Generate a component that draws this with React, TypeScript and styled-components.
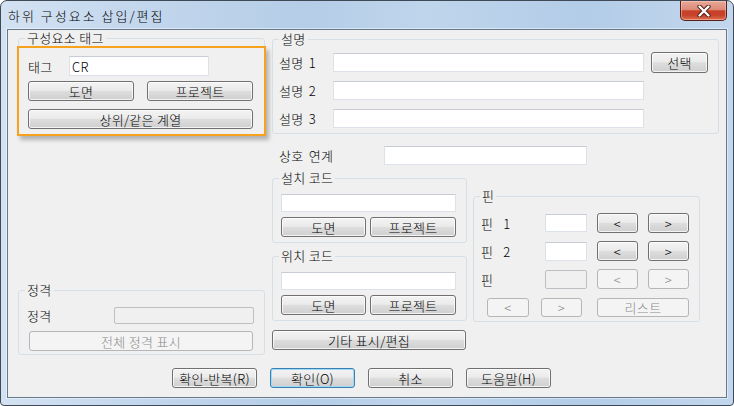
import React from "react";
import styled, { createGlobalStyle, css } from "styled-components";

const GlobalStyle = createGlobalStyle`
  html, body {
    margin: 0;
    padding: 0;
    background: #ffffff;
  }
  body {
    font-family: "Noto Sans CJK KR", "Noto Sans", sans-serif;
    font-size: 13px;
    font-weight: 300;
    letter-spacing: 0.3px;
    color: #000;
  }
  #root {
    width: 734px;
    height: 406px;
  }
`;

// window chrome
const Window = styled.div`
  box-sizing: border-box;
  width: 734px;
  height: 406px;
  display: flex;
  flex-direction: column;
  padding: 0 6px 7px;
  border: 1px solid #3f4a56;
  border-radius: 7px 7px 4px 4px;
  background: linear-gradient(
    90deg,
    #d3e2f2 0%,
    #c3d7ed 18%,
    #b5cde7 42%,
    #bfd5ec 58%,
    #b3cce7 80%,
    #c2d7ed 100%
  );
  overflow: hidden;
`;

const TitleBar = styled.div`
  flex: none;
  height: 28px;
  display: flex;
  justify-content: space-between;
  align-items: flex-start;
`;

const Title = styled.div`
  padding: 7px 0 0 1px;
  line-height: 15px;
  letter-spacing: 2px;
  color: #000;
`;

const CloseButton = styled.div`
  box-sizing: border-box;
  width: 47px;
  height: 20px;
  display: flex;
  align-items: center;
  justify-content: center;
  border: 1px solid #5a1f16;
  border-top: none;
  border-radius: 0 0 5px 5px;
  background: linear-gradient(
    180deg,
    #e8a999 0%,
    #dc8b77 45%,
    #c8412a 52%,
    #c7432a 75%,
    #dc6e50 100%
  );
  box-shadow: inset 0 0 0 1px rgba(255, 215, 205, 0.45);
`;

const Client = styled.div`
  flex: 1;
  box-sizing: border-box;
  display: flex;
  flex-direction: column;
  padding: 8px 0 0 10px;
  border: 1px solid #66788b;
  background: #f0f0f0;
  box-shadow: 0 0 0 1px rgba(255, 255, 255, 0.45);
`;

const Main = styled.div`
  display: grid;
  grid-template-columns: 247px 447px;
  column-gap: 7px;
  align-items: start;
`;

const Column = styled.div`
  display: flex;
  flex-direction: column;
`;

const RightColumn = styled(Column)`
  margin-top: 1px;
`;

// controls
const Btn = styled.button<{ $w: number; $h?: number; $default?: boolean }>`
  box-sizing: border-box;
  flex: none;
  width: ${(p) => p.$w}px;
  height: ${(p) => p.$h ?? 20}px;
  margin: 0;
  padding: 0;
  font: inherit;
  letter-spacing: inherit;
  line-height: 15px;
  color: #000;
  border: 1px solid #707070;
  border-radius: 3px;
  background: linear-gradient(180deg, #f3f3f3 0%, #ebebeb 46%, #dddddd 52%, #cfcfcf 100%);
  box-shadow: inset 0 0 0 1px rgba(255, 255, 255, 0.75);
  ${(p) =>
    p.$default &&
    css`
      border-color: #3c7fb1;
      box-shadow: inset 0 0 0 1px #9fdaf8;
    `}
  &:disabled {
    color: #8a8a8a;
    border-color: #b3b7ba;
    background: #f4f4f4;
    box-shadow: none;
  }
`;

const Field = styled.input<{ $w: number; $h?: number }>`
  box-sizing: border-box;
  flex: none;
  width: ${(p) => p.$w}px;
  height: ${(p) => p.$h ?? 19}px;
  margin: 0;
  padding: 0 2px;
  font: inherit;
  letter-spacing: inherit;
  color: #000;
  background: #fff;
  border: 1px solid #dde1e8;
  border-top-color: #c8ccd4;
  outline: none;
  &:disabled {
    background: #f0f0f0;
    border-color: #bcc0c4;
    border-radius: 2px;
  }
`;

const Label = styled.span<{ $w?: number }>`
  flex: none;
  width: ${(p) => (p.$w ? `${p.$w}px` : "auto")};
  line-height: 15px;
  white-space: nowrap;
  word-spacing: 2px;
`;

const Group = styled.div`
  position: relative;
  box-sizing: border-box;
  border: 1px solid #d5dfe5;
  border-radius: 3px;
`;

const Legend = styled.span`
  position: absolute;
  top: -9px;
  left: 6px;
  padding: 0 2px;
  line-height: 15px;
  white-space: nowrap;
  background: #f0f0f0;
`;

// 구성요소 태그
const TagGroup = styled(Group)`
  width: 247px;
`;

const Highlight = styled.div`
  box-sizing: border-box;
  height: 90px;
  margin: 7px -2px -2px;
  padding: 8px 11px 5px 9px;
  display: flex;
  flex-direction: column;
  border: 2px solid #f6a21e;
  box-shadow: 3px 4px 4px rgba(0, 0, 0, 0.25);
`;

const Row = styled.div<{ $mt?: number; $gap?: number }>`
  display: flex;
  align-items: center;
  margin-top: ${(p) => p.$mt ?? 0}px;
  gap: ${(p) => p.$gap ?? 0}px;
`;

// 설명
const DescGroup = styled(Group)`
  padding: 13px 10px 5px 6px;
  display: grid;
  grid-template-columns: 54px 311px 64px;
  grid-auto-rows: 19px;
  row-gap: 9px;
  align-items: center;
`;

const SelectBtn = styled(Btn)`
  justify-self: end;
`;

const LinkRow = styled(Row)`
  padding-left: 7px;
`;

const LowerArea = styled.div`
  display: flex;
  align-items: flex-start;
  gap: 6px;
  margin-top: 13px;
`;

const CodeGroup = styled(Group)<{ $mt?: number }>`
  width: 195px;
  margin-top: ${(p) => p.$mt ?? 0}px;
  padding: 15px 10px 5px 8px;
  display: flex;
  flex-direction: column;
`;

const ExtraBtn = styled(Btn)`
  margin-top: 9px;
`;

// 핀
const PinGroup = styled(Group)`
  width: 227px;
  margin-top: 18px;
  padding: 16px 10px 4px 7px;
  display: grid;
  grid-template-columns: 64px 42px 51px 51px;
  grid-auto-rows: 20px;
  row-gap: 8px;
  align-items: center;
`;

const PinBtn = styled(Btn)`
  justify-self: end;
`;

const PinNum = styled.span`
  margin-left: 10px;
`;

const PinNav = styled.div`
  grid-column: 1 / -1;
  display: flex;
  padding-left: 6px;
  gap: 12px;
  & > :last-child {
    margin-left: 3px;
  }
`;

// 정격
const RatingGroup = styled(Group)`
  width: 247px;
  margin-top: 155px;
  padding: 16px 10px 3px 8px;
  display: flex;
  flex-direction: column;
`;

const RatingRow = styled.div`
  height: 17px;
  display: flex;
  align-items: center;
  justify-content: space-between;
`;

const RatingBtn = styled(Btn)`
  margin: 7px 0 0 2px;
`;

const Footer = styled.div`
  display: flex;
  gap: 13px;
  margin-top: 13px;
  padding-left: 154px;
`;

const CloseGlyph = () => (
  <svg width="14" height="12" viewBox="0 0 14 12">
    <path d="M2.5 1.5 L11.5 10.5 M11.5 1.5 L2.5 10.5" stroke="#4a1a12" strokeWidth="4.2" strokeLinecap="round" fill="none" />
    <path d="M2.5 1.5 L11.5 10.5 M11.5 1.5 L2.5 10.5" stroke="#ffffff" strokeWidth="2.4" strokeLinecap="round" fill="none" />
  </svg>
);

const CodeBox: React.FC<{ title: string; mt?: number }> = ({ title, mt }) => (
  <CodeGroup $mt={mt}>
    <Legend>{title}</Legend>
    <Field $w={175} $h={18} />
    <Row $mt={5} $gap={4}>
      <Btn $w={85}>도면</Btn>
      <Btn $w={86}>프로젝트</Btn>
    </Row>
  </CodeGroup>
);

export default function App() {
  return (
    <>
      <GlobalStyle />
      <Window>
        <TitleBar>
          <Title>하위 구성요소 삽입/편집</Title>
          <CloseButton>
            <CloseGlyph />
          </CloseButton>
        </TitleBar>
        <Client>
          <Main>
            <Column>
              <TagGroup>
                <Legend>구성요소 태그</Legend>
                <Highlight>
                  <Row>
                    <Label $w={41}>태그</Label>
                    <Field $w={140} $h={20} defaultValue="CR" />
                  </Row>
                  <Row $mt={5} $gap={13}>
                    <Btn $w={106}>도면</Btn>
                    <Btn $w={106}>프로젝트</Btn>
                  </Row>
                  <Row $mt={8}>
                    <Btn $w={225}>상위/같은 계열</Btn>
                  </Row>
                </Highlight>
              </TagGroup>

              <RatingGroup>
                <Legend>정격</Legend>
                <RatingRow>
                  <Label>정격</Label>
                  <Field $w={140} $h={17} disabled />
                </RatingRow>
                <RatingBtn $w={224} disabled>
                  전체 정격 표시
                </RatingBtn>
              </RatingGroup>
            </Column>

            <RightColumn>
              <DescGroup>
                <Legend>설명</Legend>
                <Label>설명 1</Label>
                <Field $w={311} />
                <SelectBtn $w={57} $h={21}>
                  선택
                </SelectBtn>
                <Label>설명 2</Label>
                <Field $w={311} />
                <span />
                <Label>설명 3</Label>
                <Field $w={311} />
              </DescGroup>

              <LinkRow $mt={12}>
                <Label $w={105}>상호 연계</Label>
                <Field $w={203} />
              </LinkRow>

              <LowerArea>
                <Column>
                  <CodeBox title="설치 코드" />
                  <CodeBox title="위치 코드" mt={13} />
                  <ExtraBtn $w={194}>기타 표시/편집</ExtraBtn>
                </Column>

                <PinGroup>
                  <Legend>핀</Legend>
                  <Label>
                    핀<PinNum>1</PinNum>
                  </Label>
                  <Field $w={42} $h={18} />
                  <PinBtn $w={41}>&lt;</PinBtn>
                  <PinBtn $w={41}>&gt;</PinBtn>

                  <Label>
                    핀<PinNum>2</PinNum>
                  </Label>
                  <Field $w={42} $h={19} />
                  <PinBtn $w={41}>&lt;</PinBtn>
                  <PinBtn $w={41}>&gt;</PinBtn>

                  <Label>핀</Label>
                  <Field $w={42} $h={19} disabled />
                  <PinBtn $w={41} disabled>
                    &lt;
                  </PinBtn>
                  <PinBtn $w={41} disabled>
                    &gt;
                  </PinBtn>

                  <PinNav>
                    <Btn $w={42} $h={19} disabled>
                      &lt;
                    </Btn>
                    <Btn $w={41} $h={19} disabled>
                      &gt;
                    </Btn>
                    <Btn $w={92} $h={19} disabled>
                      리스트
                    </Btn>
                  </PinNav>
                </PinGroup>
              </LowerArea>
            </RightColumn>
          </Main>

          <Footer>
            <Btn $w={85}>확인-반복(R)</Btn>
            <Btn $w={85} $default>
              확인(O)
            </Btn>
            <Btn $w={85}>취소</Btn>
            <Btn $w={85}>도움말(H)</Btn>
          </Footer>
        </Client>
      </Window>
    </>
  );
}
